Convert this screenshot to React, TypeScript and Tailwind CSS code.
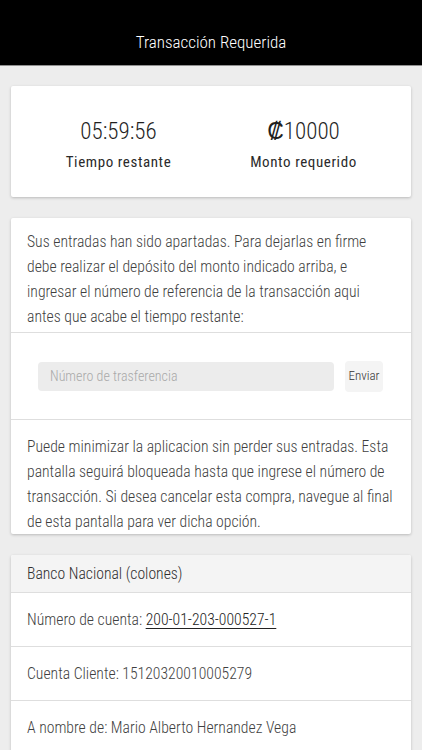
import React from "react";

const F = "font-['Roboto_Condensed','Roboto','Liberation_Sans',sans-serif]";

export default function App() {
  return (
    <div className={`min-h-[750px] bg-[#ededed] ${F} font-light text-[#3a3a3a]`}>
      <header className="h-[66px] bg-black border-b border-[#8f8f8f] pt-[20px]">
        <div className="h-[45px] flex items-center justify-center text-white text-[17px] font-light">
          Transacción Requerida
        </div>
      </header>

      <main className="px-[11px] pt-[20px] flex flex-col gap-[21px]">
        <section className="bg-white rounded-[2px] shadow-[0_1px_3px_rgba(0,0,0,0.22)] h-[111px] px-[15px] pt-[6px] grid grid-cols-2 items-center">
          <div className="flex flex-col items-center">
            <div className="text-[23px] leading-[28px] font-light text-[#1f1f1f]">05:59:56</div>
            <div className="mt-[6px] text-[15px] leading-[20px] font-normal tracking-[0.6px] text-[#2a2a2a]">Tiempo restante</div>
          </div>
          <div className="flex flex-col items-center">
            <div className="text-[23px] leading-[28px] font-light text-[#1f1f1f]">₡10000</div>
            <div className="mt-[6px] text-[15px] leading-[20px] font-normal tracking-[0.6px] text-[#2a2a2a]">Monto requerido</div>
          </div>
        </section>

        <section className="bg-white rounded-[2px] shadow-[0_1px_3px_rgba(0,0,0,0.22)] flex flex-col">
          <p className="px-4 pt-[11px] pb-[3px] text-[15.7px] leading-[25px] text-[#3f3f3f]">
            Sus entradas han sido apartadas. Para dejarlas en firme<br />
            debe realizar el depósito del monto indicado arriba, e<br />
            ingresar el número de referencia de la transacción aqui<br />
            antes que acabe el tiempo restante:
          </p>
          <div className="border-t border-[#dedede] h-[87px] pl-[27px] pr-[28px] flex items-center gap-[11px]">
            <div className="flex-1 h-[29px] rounded-[4px] bg-[#ececec] flex items-center px-[12px] text-[14px] text-[#a9a9a9]">
              Número de trasferencia
            </div>
            <button className="h-[31px] w-[38px] rounded-[4px] bg-[#f4f4f4] text-[13px] font-light text-[#333] flex items-center justify-center">
              Enviar
            </button>
          </div>
          <p className="border-t border-[#dedede] px-4 pt-[14px] pb-0 text-[15.7px] leading-[25px] text-[#3f3f3f]">
            Puede minimizar la aplicacion sin perder sus entradas. Esta<br />
            pantalla seguirá bloqueada hasta que ingrese el número de<br />
            transacción. Si desea cancelar esta compra, navegue al final<br />
            de esta pantalla para ver dicha opción.
          </p>
        </section>

        <section className="bg-white rounded-[2px] shadow-[0_1px_3px_rgba(0,0,0,0.22)] flex flex-col">
          <div className="h-[37px] bg-[#f4f4f4] px-4 flex items-center text-[15.7px] text-[#2f2f2f] rounded-t-[2px]">
            Banco Nacional (colones)
          </div>
          <div className="border-t border-[#dedede] h-[54px] px-4 flex items-center text-[15.7px] text-[#3f3f3f]">
            <span>
              Número de cuenta:{" "}
              <span className="underline underline-offset-[3px] text-[#222]">200-01-203-000527-1</span>
            </span>
          </div>
          <div className="border-t border-[#dedede] h-[54px] px-4 flex items-center text-[15.7px] text-[#3f3f3f]">
            Cuenta Cliente: 15120320010005279
          </div>
          <div className="border-t border-[#dedede] h-[54px] px-4 flex items-center text-[15.7px] text-[#3f3f3f]">
            A nombre de: Mario Alberto Hernandez Vega
          </div>
        </section>
      </main>
    </div>
  );
}
